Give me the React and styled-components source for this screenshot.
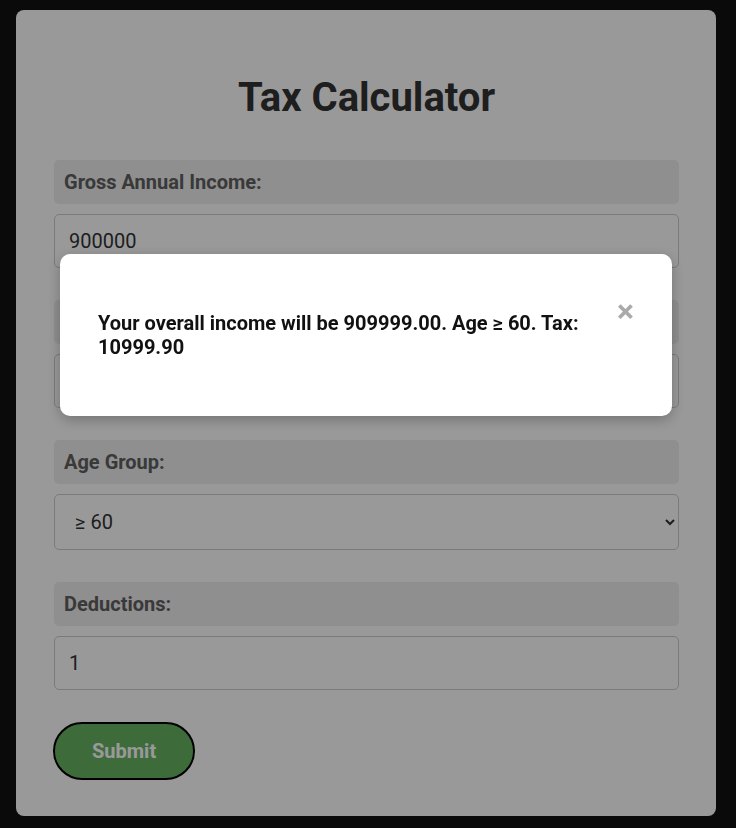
import React from 'react';
import styled, { createGlobalStyle } from 'styled-components';

const GlobalStyle = createGlobalStyle`
  html, body {
    margin: 0;
    padding: 0;
    background-color: #111;
    font-family: Roboto, "Liberation Sans", Arial, sans-serif;
  }
  * {
    box-sizing: border-box;
  }
`

const Page = styled.div`
  min-height: 828px;
  padding: 10px 20px 12px 16px;
`

const Card = styled.form`
  width: 700px;
  background-color: #fff;
  border-radius: 8px;
  padding: 64px 37px 36px 38px;
`

const Title = styled.h1`
  margin: 0 0 39px;
  text-align: center;
  font-size: 40px;
  font-weight: 700;
  color: #333;
`

const Field = styled.div`
  display: flex;
  flex-direction: column;
  gap: 10px;
  margin-bottom: 32px;
`

const Label = styled.label`
  display: block;
  padding: 10px;
  border-radius: 5px;
  background-color: #eee;
  font-size: 20px;
  font-weight: 700;
  line-height: 24px;
  color: #606060;
`

const Input = styled.input`
  width: 100%;
  height: 54px;
  padding: 0 14px;
  border: 1px solid #ccc;
  border-radius: 5px;
  background: #fff;
  font-family: Roboto, "Liberation Sans", Arial, sans-serif;
  font-size: 20px;
  color: #333;
  outline: none;
`

const Select = styled.select`
  width: 100%;
  height: 56px;
  padding: 0 10px 0 16px;
  border: 1px solid #ccc;
  border-radius: 5px;
  background: #fff;
  font-family: Roboto, "Liberation Sans", Arial, sans-serif;
  font-size: 20px;
  color: #333;
  outline: none;
`

const SubmitButton = styled.button`
  margin-left: -1px;
  padding: 15px 37px;
  border: 2px solid #000;
  border-radius: 30px;
  background-color: #68b262;
  color: #fff;
  font-family: Roboto, "Liberation Sans", Arial, sans-serif;
  font-size: 20px;
  font-weight: 700;
  line-height: 24px;
  cursor: pointer;
`

const Overlay = styled.div`
  position: fixed;
  inset: 0;
  background-color: rgba(0, 0, 0, 0.4);
  padding: 254px 0 0 60px;
`

const Modal = styled.div`
  position: relative;
  width: 612px;
  min-height: 162px;
  padding: 57px 38px 40px;
  background-color: #fff;
  border-radius: 10px;
  box-shadow: 0 4px 14px rgba(0, 0, 0, 0.25);
`

const Message = styled.p`
  margin: 0;
  width: 500px;
  font-size: 20px;
  font-weight: 700;
  line-height: 24px;
  color: #111;
`

const Close = styled.span`
  position: absolute;
  top: 41px;
  right: 38px;
  font-size: 32px;
  font-weight: 700;
  line-height: 1;
  color: #aaa;
  cursor: pointer;
`

const App = () => {
  return (<Page>
    <GlobalStyle />
    <Card onSubmit={(e) => e.preventDefault()}>
      <Title>Tax Calculator</Title>
      <Field>
        <Label>Gross Annual Income:</Label>
        <Input type="text" defaultValue="900000" />
      </Field>
      <Field>
        <Label>Extra Income:</Label>
        <Input type="text" defaultValue="10000" />
      </Field>
      <Field>
        <Label>Age Group:</Label>
        <Select defaultValue="60">
          <option value="40">&lt; 40</option>
          <option value="4060">≥ 40 &amp; &lt; 60</option>
          <option value="60">≥ 60</option>
        </Select>
      </Field>
      <Field>
        <Label>Deductions:</Label>
        <Input type="text" defaultValue="1" />
      </Field>
      <SubmitButton type="submit">Submit</SubmitButton>
    </Card>
    <Overlay>
      <Modal>
        <Close>×</Close>
        <Message>Your overall income will be 909999.00. Age ≥ 60. Tax: 10999.90</Message>
      </Modal>
    </Overlay>
  </Page>
  );
}

export default App;
